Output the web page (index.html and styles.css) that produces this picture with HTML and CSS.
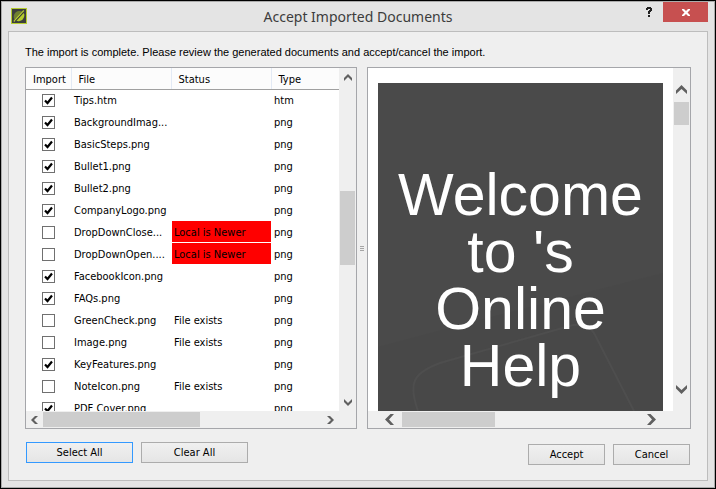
FILE: index.html
```html
<!DOCTYPE html>
<html lang="en">
<head>
<meta charset="utf-8">
<title>Accept Imported Documents</title>
<link rel="stylesheet" href="styles.css">
</head>
<body>
<main class="window">
  <header class="titlebar">
    <svg class="app-icon" viewBox="0 0 16 16" aria-hidden="true">
      <rect x="0.5" y="0.5" width="15" height="15" fill="#3c3f3c" stroke="#b5cc2e"/>
      <path d="M3.500 11.500C1.500 8 3.500 3.500 8 3c1.500-.1 2.500 .2 3 .5L4 11.800z" fill="#6f8030"/>
      <path d="M12.800 5C14.500 8 12 12.800 8 13.200c-1.200 .1-2-.1-2.700-.4z" fill="#b5cc2e"/>
      <path d="M2.800 13.500 12.800 2.500" fill="none" stroke="#b5cc2e" stroke-width="1.200"/>
      <path d="M4.500 13 13 3.800" stroke="#3c3f3c"/>
    </svg>
    <h1 class="title">Accept Imported Documents</h1>
    <div class="caption-buttons">
      <button class="help" type="button" aria-label="Help"><svg width="6" height="10" viewBox="0 0 6 10"><path d="M1 0h4v1h1v3H5v1H4v2H2V4h1V3h1V2H2v1H0V1h1zM2 8h2v2H2z" fill="#222"/></svg></button>
      <button class="close" type="button" aria-label="Close"><svg width="8" height="7" viewBox="0 0 8 7"><path d="M0 0h2l2 2 2-2h2v1L5.500 3.500 8 6v1H6L4 5 2 7H0V6l2.500-2.500L0 1z" fill="#fff"/></svg></button>
    </div>
  </header>

  <section class="content">
    <p class="message">The import is complete. Please review the generated documents and accept/cancel the import.</p>
    <div class="panes">
      <div class="pane list-pane">
        <div class="viewport">
          <table class="files">
            <colgroup><col class="c-import"><col class="c-file"><col class="c-status"><col class="c-type"></colgroup>
            <thead><tr><th>Import</th><th>File</th><th>Status</th><th>Type</th></tr></thead>
            <tbody>
              <tr><td><input type="checkbox" aria-label="Tips.htm" checked></td><td>Tips.htm</td><td></td><td>htm</td></tr>
              <tr><td><input type="checkbox" aria-label="BackgroundImag..." checked></td><td>BackgroundImag...</td><td></td><td>png</td></tr>
              <tr><td><input type="checkbox" aria-label="BasicSteps.png" checked></td><td>BasicSteps.png</td><td></td><td>png</td></tr>
              <tr><td><input type="checkbox" aria-label="Bullet1.png" checked></td><td>Bullet1.png</td><td></td><td>png</td></tr>
              <tr><td><input type="checkbox" aria-label="Bullet2.png" checked></td><td>Bullet2.png</td><td></td><td>png</td></tr>
              <tr><td><input type="checkbox" aria-label="CompanyLogo.png" checked></td><td>CompanyLogo.png</td><td></td><td>png</td></tr>
              <tr><td><input type="checkbox" aria-label="DropDownClose..."></td><td>DropDownClose...</td><td class="flagged"><span class="conflict">Local is Newer</span></td><td>png</td></tr>
              <tr><td><input type="checkbox" aria-label="DropDownOpen...."></td><td>DropDownOpen....</td><td class="flagged"><span class="conflict">Local is Newer</span></td><td>png</td></tr>
              <tr><td><input type="checkbox" aria-label="FacebookIcon.png" checked></td><td>FacebookIcon.png</td><td></td><td>png</td></tr>
              <tr><td><input type="checkbox" aria-label="FAQs.png" checked></td><td>FAQs.png</td><td></td><td>png</td></tr>
              <tr><td><input type="checkbox" aria-label="GreenCheck.png"></td><td>GreenCheck.png</td><td>File exists</td><td>png</td></tr>
              <tr><td><input type="checkbox" aria-label="Image.png"></td><td>Image.png</td><td>File exists</td><td>png</td></tr>
              <tr><td><input type="checkbox" aria-label="KeyFeatures.png" checked></td><td>KeyFeatures.png</td><td></td><td>png</td></tr>
              <tr><td><input type="checkbox" aria-label="NoteIcon.png"></td><td>NoteIcon.png</td><td>File exists</td><td>png</td></tr>
              <tr><td><input type="checkbox" aria-label="PDF Cover.png" checked></td><td>PDF Cover.png</td><td></td><td>png</td></tr>
            </tbody>
          </table>
        </div>
        <div class="vbar">
          <svg width="8" height="7" viewBox="0 0 8 7"><path d="M4 0 8 4V7L4 3 0 7V4z"/></svg>
          <div class="track"><span class="gap-before"></span><span class="thumb"></span><span class="gap-after"></span></div>
          <svg width="8" height="7" viewBox="0 0 8 7"><path d="M4 7 8 3V0L4 4 0 0V3z"/></svg>
        </div>
        <div class="hbar">
          <svg width="7" height="8" viewBox="0 0 7 8"><path d="M0 4 4 0H7L3 4 7 8H4z"/></svg>
          <div class="track"><span class="thumb"></span><span class="gap-after"></span></div>
          <svg width="7" height="8" viewBox="0 0 7 8"><path d="M7 4 3 0H0L4 4 0 8H3z"/></svg>
        </div>
      </div>

      <div class="splitter" role="separator"><i></i><i></i><i></i></div>

      <div class="pane preview-pane">
        <div class="viewport">
          <div class="page">
            <svg class="page-art" viewBox="0 0 285 328" preserveAspectRatio="none" aria-hidden="true">
              <path d="M0 264 90 240 285 190V328H0z" fill="#474747" opacity=".6"/>
              <path d="M40 328C30 300 35 290 62 280L195 242Q210 240 216 250L256 328" fill="none" stroke="#4e4e4e" stroke-width="2"/>
            </svg>
            <h2 class="welcome">Welcome to 's Online Help</h2>
          </div>
        </div>
        <div class="vbar">
          <svg width="11" height="9" viewBox="0 0 11 9"><path d="M5.500 0 11 5.500V9L5.500 4 0 9V5.500z"/></svg>
          <div class="track"><span class="thumb"></span><span class="gap-after"></span></div>
          <svg width="11" height="9" viewBox="0 0 11 9"><path d="M5.500 9 11 3.500V0L5.500 5 0 0V3.500z"/></svg>
        </div>
        <div class="hbar">
          <svg width="9" height="11" viewBox="0 0 9 11"><path d="M0 5.500 5.500 0H9L4 5.500 9 11H5.500z"/></svg>
          <div class="track"><span class="thumb"></span><span class="gap-after"></span></div>
          <svg width="9" height="11" viewBox="0 0 9 11"><path d="M9 5.500 3.500 0H0L5 5.500 0 11H3.500z"/></svg>
        </div>
      </div>
    </div>

    <footer class="actions">
      <div class="group">
        <button class="btn wide focused" type="button">Select All</button>
        <button class="btn wide" type="button">Clear All</button>
      </div>
      <div class="group end">
        <button class="btn" type="button">Accept</button>
        <button class="btn" type="button">Cancel</button>
      </div>
    </footer>
  </section>
</main>
</body>
</html>
```
FILE: styles.css
```css
* { box-sizing: border-box; }

body {
  margin: 0;
  background: #000;
  color: #000;
  font: 11px/16px "DejaVu Sans Condensed", "Noto Sans", sans-serif;
}

.window {
  display: flex;
  flex-direction: column;
  min-height: 100vh;
  padding: 0 7px 7px;
  border: 1px solid #000;
  background: #e4e4e4;
  box-shadow: inset 0 0 0 1px #ababab;
}

/* Title bar */
.titlebar {
  display: grid;
  grid-template-columns: 67px 1fr 67px;
  align-items: start;
  height: 30px;
}
.app-icon { width: 16px; height: 16px; margin: 7px 0 0 3px; }
.title {
  margin: 5px 0 0;
  color: #3c3c3c;
  font: 14px/22px "Noto Sans", sans-serif;
  text-align: center;
}
.caption-buttons {
  display: flex;
  justify-content: flex-end;
  gap: 11px;
  margin-top: 1px;
}
.caption-buttons button {
  display: grid;
  place-items: center;
  height: 20px;
  padding: 0;
  border: 0;
  background: none;
}
.caption-buttons .help { width: 6px; }
.caption-buttons .close { width: 45px; background: #c75050; }

/* Dialog body */
.content {
  display: flex;
  flex: 1;
  flex-direction: column;
  padding: 12px 16px 15px;
  border: 1px solid #bdbdbd;
  background: #efefef;
}
.message {
  margin: 0 0 7px;
  font-family: "Liberation Sans", Arial, sans-serif;
}

.panes {
  display: grid;
  grid-template-columns: 332fr 10px 324fr;
  flex: 1;
}
.pane {
  display: grid;
  grid-template-columns: 1fr 17px;
  grid-template-rows: 343px 17px;
  min-width: 0;
  border: 1px solid #a5a6aa;
  background: #efefef;
}
.viewport { overflow: hidden; min-width: 0; background: #fff; }

/* File table */
.files {
  width: 100%;
  border-collapse: collapse;
  table-layout: fixed;
}
.c-import { width: 45px; }
.c-file { width: 100px; }
.c-status { width: 100px; }
.files th {
  height: 21px;
  padding: 3px 0 0 7px;
  border-right: 1px solid #e3eaf5;
  border-bottom: 1px solid #a0a0a0;
  background: #fcfcfc;
  font-weight: normal;
  text-align: left;
}
.files th:last-child { border-right: 0; }
.files td {
  height: 22px;
  padding: 1px 0 0 3px;
  white-space: nowrap;
}
.files td:first-child { padding: 0; text-align: center; }
.files .flagged { padding: 0 0 0 1px; }
.files input {
  display: block;
  width: 13px;
  height: 13px;
  margin: 0 auto;
  appearance: none;
  border: 1px solid #707070;
  background: #fff;
}
.files input:checked {
  background: #fff url("data:image/svg+xml,%3Csvg xmlns='http://www.w3.org/2000/svg' viewBox='0 0 11 11'%3E%3Cpath d='M2 5.500 4.500 8 9 2.500' fill='none' stroke='%23000' stroke-width='2.200'/%3E%3C/svg%3E");
}
.conflict {
  display: block;
  height: 21px;
  margin-bottom: 1px;
  padding-left: 2px;
  background: #f00;
  line-height: 23px;
}

/* Scroll bars */
.vbar, .hbar { display: flex; align-items: center; }
.vbar { flex-direction: column; }
.vbar svg, .hbar svg { flex: none; fill: #606060; }
.track { display: flex; flex: 1; }
.vbar .track { flex-direction: column; }
.thumb { background: #cdcdcd; }
.vbar .thumb { width: 15px; }
.hbar .thumb { height: 15px; }

.list-pane .vbar { gap: 5px; padding: 6px 0 5px; }
.list-pane .vbar .gap-before { flex: 105; }
.list-pane .vbar .thumb { flex: 74; }
.list-pane .vbar .gap-after { flex: 129; }
.list-pane .hbar { gap: 5px; padding: 0 5px; }
.list-pane .hbar .thumb { flex: 158; }
.list-pane .hbar .gap-after { flex: 122; }

.preview-pane .vbar { gap: 8px; padding: 17px 0; }
.preview-pane .vbar .thumb { flex: 23; }
.preview-pane .vbar .gap-after { flex: 252; }
.preview-pane .hbar { gap: 8px; padding: 0 17px; }
.preview-pane .hbar .thumb { flex: 93; }
.preview-pane .hbar .gap-after { flex: 144; }

.splitter {
  display: flex;
  flex-direction: column;
  align-items: center;
  justify-content: center;
  gap: 1px;
}
.splitter i { width: 4px; height: 1px; background: #a5a5a5; }

/* Preview */
.preview-pane .viewport { padding: 15px 10px 0; }
.page {
  position: relative;
  height: 100%;
  padding-top: 84px;
  background: #4a4a4a;
}
.page-art { position: absolute; inset: 0; width: 100%; height: 100%; }
.welcome {
  position: relative;
  margin: 0 20px;
  color: #fff;
  font: 59px/57px "Liberation Sans", Arial, sans-serif;
  text-align: center;
}

/* Buttons */
.actions {
  display: flex;
  justify-content: space-between;
  padding: 13px 1px 0;
}
.group { display: flex; align-items: flex-start; gap: 8px; }
.group.end { padding-top: 2px; }
.btn {
  width: 77px;
  height: 21px;
  padding: 0;
  border: 1px solid #acacac;
  background: linear-gradient(#f0f0f0, #e5e5e5);
  color: #000;
  font: inherit;
}
.btn.wide { width: 107px; }
.btn.focused { border-color: #3399ff; }
```
